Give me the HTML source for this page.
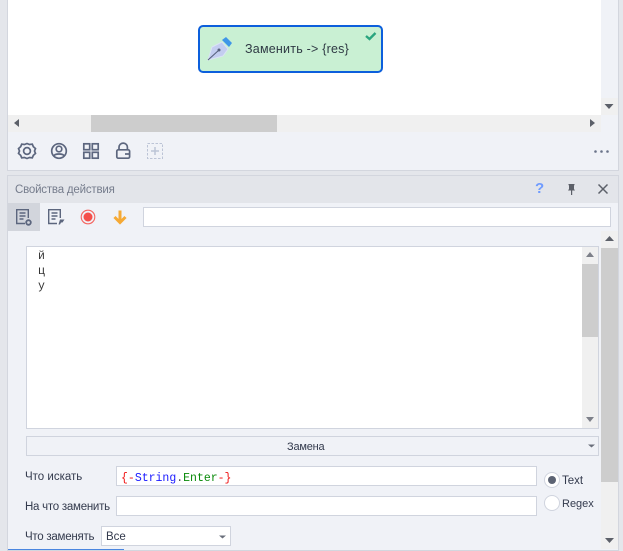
<!DOCTYPE html>
<html><head><meta charset="utf-8">
<style>
html,body{margin:0;padding:0;width:623px;height:550px;overflow:hidden;background:#e4e6eb;font-family:"DejaVu Sans","Liberation Sans",sans-serif;}
.a{position:absolute;box-sizing:border-box;}
.t{position:absolute;font-family:"Liberation Sans",sans-serif;font-size:11.5px;color:#333a4d;white-space:nowrap;line-height:14px;}
.inp{position:absolute;box-sizing:border-box;background:#fff;border:1px solid #d0d4de;}
svg{position:absolute;overflow:visible;}
</style></head><body>
<!-- top panel -->
<div class="a" style="left:7px;top:0;width:612px;height:171px;background:#f0f2f7;border:1px solid #d3d6de;border-top:0"></div>
<div class="a" style="left:8px;top:0;width:593px;height:115px;background:#fff"></div>
<div class="a" style="left:601px;top:0;width:17px;height:115px;background:#f0f2f7"></div>
<div class="a" style="left:601px;top:98px;width:17px;height:17px;background:#f0f0f0"></div>
<div class="a" style="left:8px;top:115px;width:593px;height:17px;background:#f0f0f0"></div>
<div class="a" style="left:91px;top:115px;width:186px;height:17px;background:#cdcdcd"></div>
<svg style="left:0;top:0" width="623" height="132"><path d="M604.5 104h9l-4.500 5z" fill="#5c6069"/><path d="M19 119v8l-5-4z" fill="#5c6069"/><path d="M590 119v8l5-4z" fill="#5c6069"/></svg>

<!-- node -->
<div class="a" style="left:198px;top:25px;width:185px;height:48px;background:#c9f0d3;border:2px solid #0c5fdc;border-radius:5px"></div>
<svg style="left:205px;top:33px" width="32" height="32" viewBox="0 0 32 32">
<path d="M3 27 L7 14 L17 9 L23 16 L18 23z" fill="#c3cdf0" stroke="#dbe3f5" stroke-width="1"/>
<path d="M3 27 L14 17" stroke="#56607c" stroke-width="1.100"/><circle cx="14" cy="17" r="1.500" fill="#56607c"/>
<path d="M17 7 L21 4 L27 10 L24 14z" fill="#3f96e8"/>
</svg>
<div class="t" style="left:245px;top:42px;color:#2f3a44;font-size:12.5px;letter-spacing:.22px">Заменить -&gt; {res}</div>
<svg style="left:365px;top:31px" width="12" height="10"><path d="M1 5l3.500 3L10.500 2" fill="none" stroke="#2aa57f" stroke-width="2.400"/></svg>

<!-- bottom icons -->
<svg style="left:0;top:135px" width="170" height="32" fill="none" stroke="#5c667e" stroke-width="1.700">
<path d="M27 8.500l2.500 1 2.800-.3 1 2.400 2.200 2-1 2.400 1 2.400-2.200 2-1 2.400-2.800-.3-2.500 1-2.500-1-2.800.3-1-2.400-2.200-2 1-2.400-1-2.400 2.200-2 1-2.400 2.800.3z"/>
<circle cx="27" cy="16" r="3.400"/>
<circle cx="59" cy="16" r="7.300"/><circle cx="59" cy="14" r="2.800"/><path d="M53.800 21c1-2.700 9.400-2.700 10.400 0"/>
<rect x="83.800" y="8.800" width="5.900" height="5.900"/><rect x="92.300" y="8.800" width="5.900" height="5.900"/><rect x="83.800" y="17.300" width="5.900" height="5.900"/><rect x="92.300" y="17.300" width="5.900" height="5.900"/>
<rect x="116.800" y="14.800" width="12.800" height="8.400" rx="1.500"/><path d="M119 14.800v-2.500a4.200 4.200 0 0 1 8.400 0v2.500"/><path d="M125 19h5"/>
<g stroke="#bcc4d6" stroke-width="1"><rect x="147.500" y="8.500" width="15" height="15" stroke-dasharray="2.500 1.500"/><path d="M151 16h8M155 12v8" stroke-width="1.500"/></g>
</svg>
<svg style="left:590px;top:146px" width="24" height="10"><circle cx="5.500" cy="5.500" r="1.300" fill="#6a7389"/><circle cx="11.500" cy="5.500" r="1.300" fill="#6a7389"/><circle cx="17.500" cy="5.500" r="1.300" fill="#6a7389"/></svg>

<!-- properties panel -->
<div class="a" style="left:7px;top:175px;width:612px;height:376px;background:#f0f2f7;border:1px solid #d3d6de"></div>
<div class="a" style="left:8px;top:176px;width:610px;height:27px;background:#e3e5ea"></div>
<div class="t" style="left:15px;top:183px;color:#757c8c;letter-spacing:-.2px">Свойства действия</div>
<div class="t" style="left:535px;top:180px;color:#6f9bff;font-size:15px;line-height:18px;font-weight:bold">?</div>
<svg style="left:565px;top:182px" width="14" height="14" fill="#5c6069"><path d="M3.500 2h6v1l-.5.500V7l1 1.500H3L4 7V3.500L3.500 3zM6 8.500h1.200V13H6z"/></svg>
<svg style="left:597px;top:183px" width="12" height="12"><path d="M1.500 1.500l9 9M10.500 1.500l-9 9" stroke="#5c6069" stroke-width="1.500"/></svg>

<!-- toolbar -->
<div class="a" style="left:8px;top:203px;width:32px;height:28px;background:#d2d5dc"></div>
<svg style="left:0;top:203px" width="140" height="28" fill="none" stroke="#5c667e" stroke-width="1.400">
<path d="M25 20.500H16.700V6.700H28.300V15M19.500 10h6M19.500 13h6M19.500 16h4"/>
<circle cx="28.500" cy="19.500" r="2.300" stroke-width="1.800"/>
<path d="M57 20.500H48.700V6.700H60.300V15M51.500 10h6M51.500 13h6M51.500 16h4"/>
<path d="M58.500 21.500l1.500-5h4.500l-2 3h-1.500l-1 2z" fill="#5c667e" stroke="none"/>
<circle cx="88" cy="14" r="6.800" stroke="#f4645f" stroke-width="1.100"/><circle cx="88" cy="14" r="4.500" fill="#f4504b" stroke="none"/>
<path d="M120 7.500V19.500M114.500 14l5.500 5.500 5.500-5.500" stroke="#f5a935" stroke-width="3"/>
</svg>
<div class="inp" style="left:143px;top:207px;width:468px;height:20px"></div>

<!-- right scrollbar -->
<div class="a" style="left:601px;top:231px;width:17px;height:318px;background:#f0f0f0"></div>
<div class="a" style="left:601px;top:248px;width:17px;height:234px;background:#cdcdcd"></div>
<svg style="left:601px;top:231px" width="17" height="318"><path d="M4 10h9l-4.500-5z" fill="#5c6069"/><path d="M4 307h9l-4.500 5z" fill="#5c6069"/></svg>

<!-- textarea -->
<div class="inp" style="left:26px;top:246px;width:573px;height:183px"></div>
<div class="a" style="left:582px;top:247px;width:16px;height:181px;background:#f0f0f0"></div>
<div class="a" style="left:582px;top:264px;width:16px;height:73px;background:#cdcdcd"></div>
<svg style="left:582px;top:247px" width="16" height="181"><path d="M4 10h8l-4-5z" fill="#7d8089"/><path d="M4 170h8l-4 5z" fill="#7d8089"/></svg>
<div class="a" style="left:38px;top:249px;font-family:'Liberation Mono',monospace;font-size:11.500px;line-height:15px;color:#333">й<br>ц<br>у</div>

<!-- combo -->
<div class="a" style="left:26px;top:436px;width:573px;height:20px;background:#f0f2f7;border:1px solid #d0d4de"></div>
<div class="t" style="left:287px;top:440px;font-size:11px;letter-spacing:-.2px">Замена</div>
<svg style="left:587px;top:443px" width="10" height="6"><path d="M1 1.500h7l-3.500 3z" fill="#6a6f7b"/></svg>

<!-- fields -->
<div class="t" style="left:25px;top:470px">Что искать</div>
<div class="inp" style="left:116px;top:466px;width:421px;height:20px"></div>
<div class="a" style="left:121px;top:472px;font-family:'Liberation Mono',monospace;font-size:11.500px;line-height:14px;white-space:nowrap"><span style="color:#f01414">{-</span><span style="color:#1a1aff">String</span><span style="color:#555">.</span><span style="color:#0a8a0a">Enter</span><span style="color:#f01414">-}</span></div>
<div class="t" style="left:25px;top:500px;letter-spacing:-.25px">На что заменить</div>
<div class="inp" style="left:116px;top:496px;width:421px;height:20px"></div>
<div class="t" style="left:25px;top:530px;letter-spacing:-.25px">Что заменять</div>
<div class="inp" style="left:101px;top:526px;width:130px;height:20px"></div>
<div class="t" style="left:106px;top:530px">Все</div>
<svg style="left:218px;top:534px" width="10" height="6"><path d="M1 1.500h7l-3.500 3z" fill="#6a6f7b"/></svg>

<!-- radios -->
<div class="a" style="left:544px;top:472px;width:16px;height:16px;border-radius:50%;background:#fff;border:1px solid #d0d4de"></div>
<div class="a" style="left:548px;top:476px;width:8px;height:8px;border-radius:50%;background:#5c6373"></div>
<div class="t" style="left:562px;top:474px">Text</div>
<div class="a" style="left:544px;top:495px;width:16px;height:16px;border-radius:50%;background:#fff;border:1px solid #d0d4de"></div>
<div class="t" style="left:562px;top:497px;font-size:11px">Regex</div>

<div class="a" style="left:8px;top:549px;width:116px;height:1px;background:#4a86e0"></div>
</body></html>
